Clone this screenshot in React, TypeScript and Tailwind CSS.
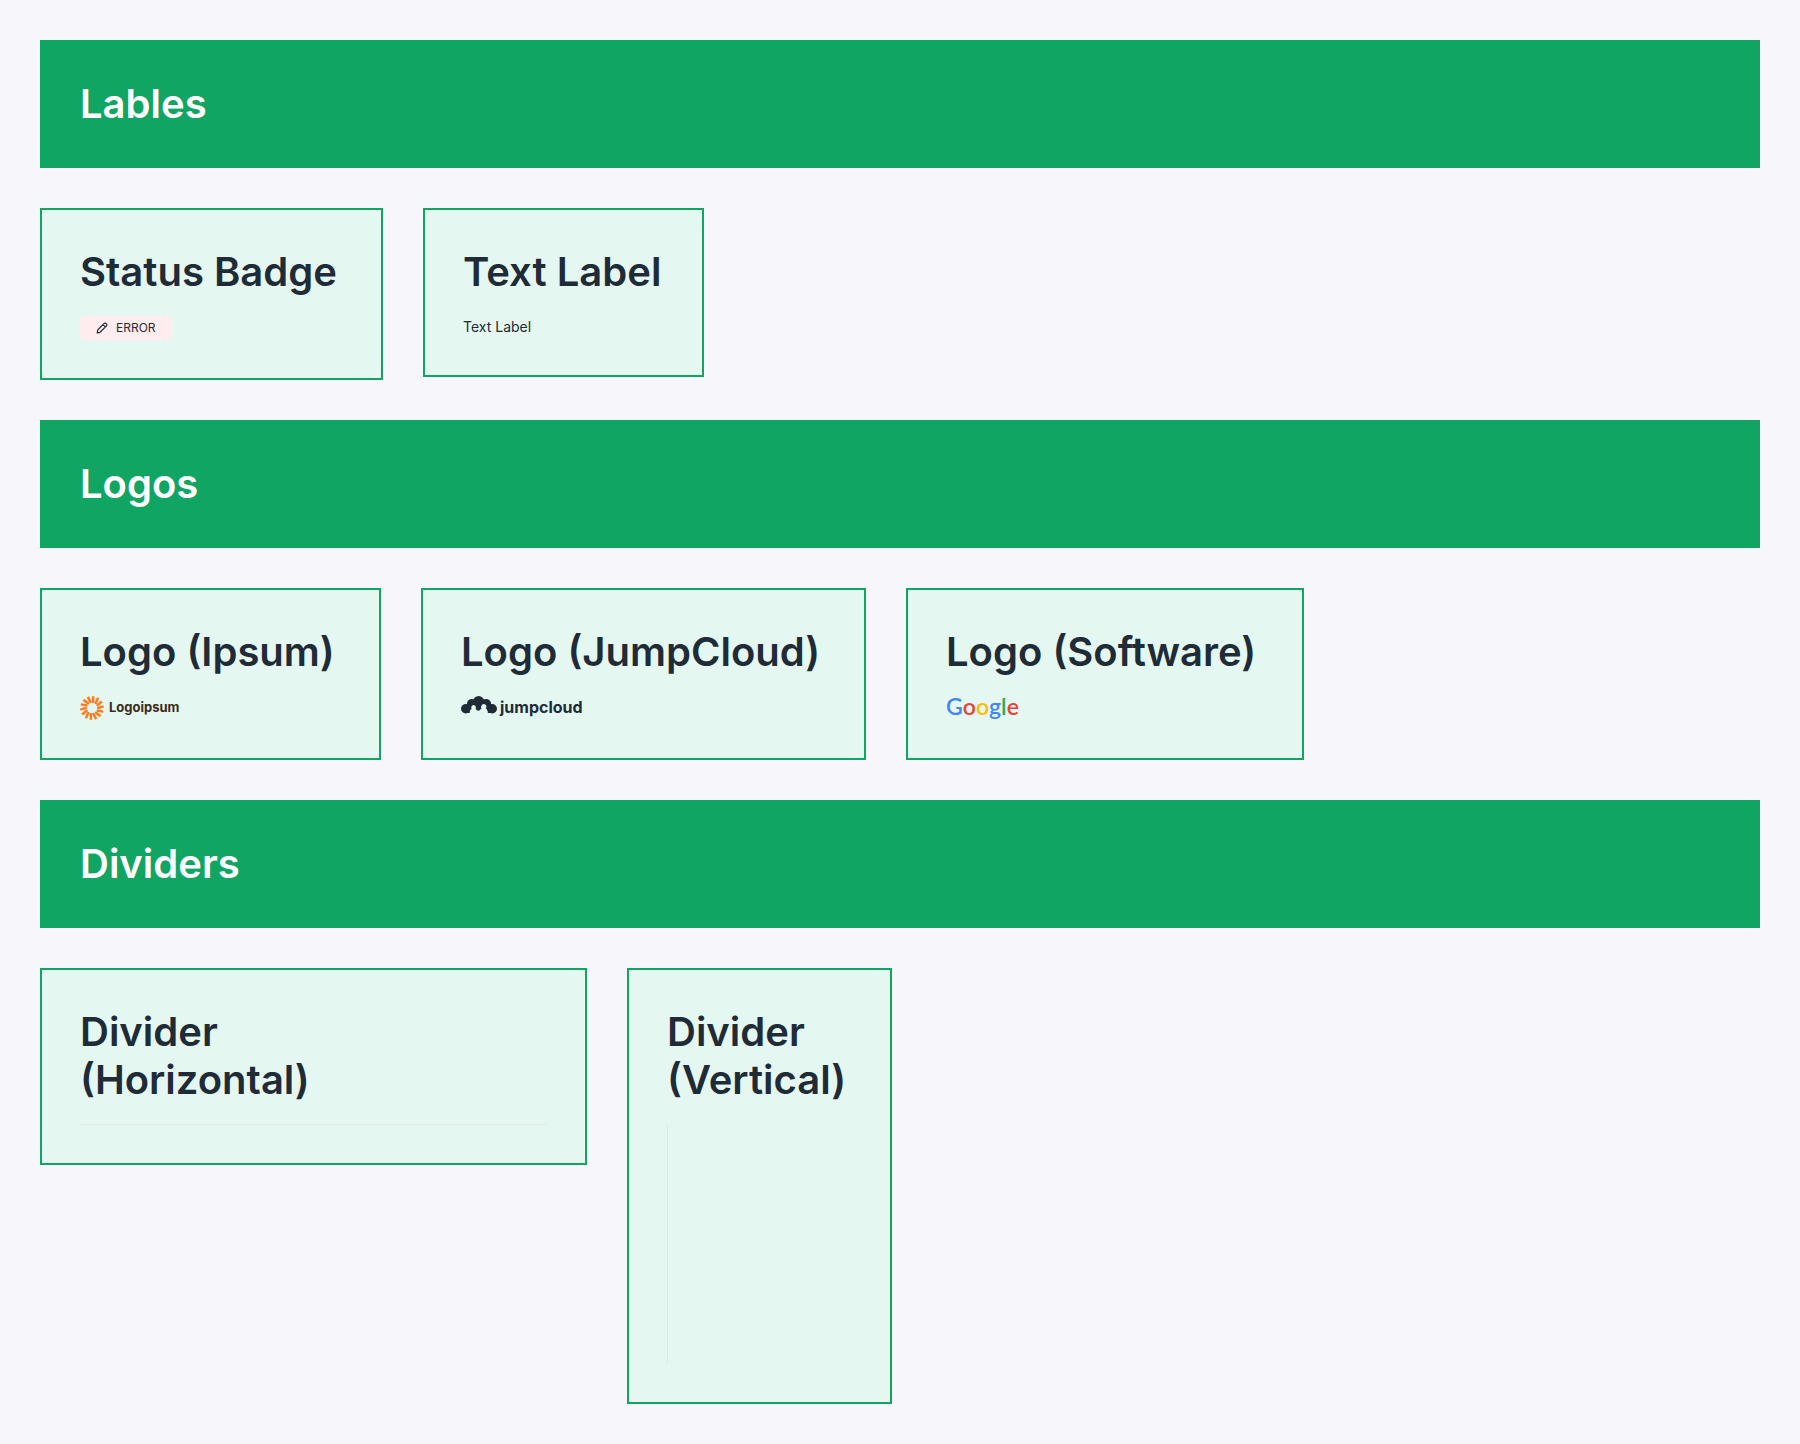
import type { ReactNode } from "react";

function Banner({ children }: { children: ReactNode }) {
  return (
    <h1 className="bg-[#10a562] p-10 text-[40px] leading-12 font-semibold text-white">{children}</h1>
  );
}

function Card({ title, size = "", children }: { title: ReactNode; size?: string; children: ReactNode }) {
  return (
    <article className={`flex flex-col gap-5 border-2 border-[#10a562] bg-[#e4f8f1] p-[38px] ${size}`}>
      <h2 className="text-[40px] leading-12 font-semibold">{title}</h2>
      {children}
    </article>
  );
}

function Section({ title, children }: { title: string; children: ReactNode }) {
  return (
    <section className="flex flex-col gap-10">
      <Banner>{title}</Banner>
      <div className="flex flex-wrap items-start gap-10">{children}</div>
    </section>
  );
}

function StatusBadge() {
  return (
    <span className="flex h-6 items-center gap-2 self-start rounded bg-[#ffecee] px-4 text-xs">
      <svg viewBox="0 0 12 12" className="size-3" fill="none" stroke="currentColor" strokeWidth="1.2" strokeLinejoin="round" aria-hidden="true">
        <path d="M1.2 10.8 1.7 8 7.9 1.7a1.6 1.6 0 0 1 2.4 0 1.6 1.6 0 0 1 0 2.4L4 10.3ZM7 2.7 9.3 5" />
      </svg>
      ERROR
    </span>
  );
}

const rays = Array.from({ length: 14 }, (_, i) => 4 + (i * 360) / 14);

function IpsumLogo() {
  return (
    <div className="flex h-6 items-center gap-[5px] text-[13px] font-bold text-[#3d2a1c]">
      <svg viewBox="0 0 24 24" className="size-6" stroke="#ff7a1c" strokeWidth="2.5" aria-hidden="true">
        {rays.map((a) => (
          <path key={a} d="M13 6.8 12.2 0.2" transform={`rotate(${a} 12 12)`} />
        ))}
      </svg>
      <span>Logoipsum</span>
    </div>
  );
}

function JumpCloudLogo() {
  return (
    <div className="flex h-6 items-start gap-[3px] text-base leading-[22px] font-bold">
      <svg viewBox="0 0 36 18" className="h-[18px] w-9" fill="currentColor" aria-hidden="true">
        <circle cx="4.7" cy="12.7" r="4.7" />
        <circle cx="31.3" cy="12.7" r="4.7" />
        <circle cx="10.8" cy="8" r="4.9" />
        <circle cx="25.2" cy="8" r="4.9" />
        <circle cx="17.6" cy="5.7" r="5.7" />
        <path d="M5 9 10 6h16l5 3-2 8h-2.600c0-2.400-.8-3.900-2.200-4.700a2.500 2.500 0 1 0-3.300 0c-1 .6-1.700 1.200-2 2.300H15.600c-.3-.8-.8-1.400-1.500-1.800a2.200 2.200 0 1 0-3 0c-1.200.7-2 2.100-2.100 4.200H7Z" />
        <g fill="#e4f8f1">
          <path d="M8.700 17.500c0-2.700.8-4 2-4.700a2.300 2.300 0 1 1 3.700 0c.7.5 1.100 1.100 1.400 1.900-1 .6-1.500 1.500-1.700 2.800Z" />
          <path d="M18.900 17.500c0-2.900.7-4.300 2-5.100a2.600 2.600 0 1 1 3.900 0c1.300.9 2 2.300 2 5.100Z" />
        </g>
      </svg>
      <span>jumpcloud</span>
    </div>
  );
}

function GoogleLogo() {
  return (
    <div className="flex h-6 items-start font-['Lato',sans-serif] text-[23px] leading-5 font-semibold text-[#4285f4]">
      <span>G</span>
      <span className="text-[#ea4335]">o</span>
      <span className="text-[#fbbc05]">o</span>
      <span>g</span>
      <span className="text-[#34a853]">l</span>
      <span className="text-[#ea4335]">e</span>
    </div>
  );
}

export default function App() {
  return (
    <main className="flex min-h-screen flex-col gap-10 bg-[#f6f6fb] p-10 font-['Inter',sans-serif] text-[#1f2b37]">
      <Section title="Lables">
        <Card title="Status Badge" size="min-w-[343px]">
          <StatusBadge />
        </Card>
        <Card title="Text Label" size="min-w-[281px]">
          <p className="text-sm leading-[21px]">Text Label</p>
        </Card>
      </Section>
      <Section title="Logos">
        <Card title="Logo (Ipsum)" size="min-w-[341px]">
          <IpsumLogo />
        </Card>
        <Card title="Logo (JumpCloud)" size="min-w-[445px]">
          <JumpCloudLogo />
        </Card>
        <Card title="Logo (Software)" size="min-w-[398px]">
          <GoogleLogo />
        </Card>
      </Section>
      <Section title="Dividers">
        <Card title={<>Divider<br />(Horizontal)</>}>
          <hr className="w-[467px] max-w-full border-[#e2e8e6]" />
        </Card>
        <Card title={<>Divider<br />(Vertical)</>} size="min-w-[265px]">
          <div role="separator" aria-orientation="vertical" className="h-60 w-px bg-[#e2e8e6]" />
        </Card>
      </Section>
    </main>
  );
}
